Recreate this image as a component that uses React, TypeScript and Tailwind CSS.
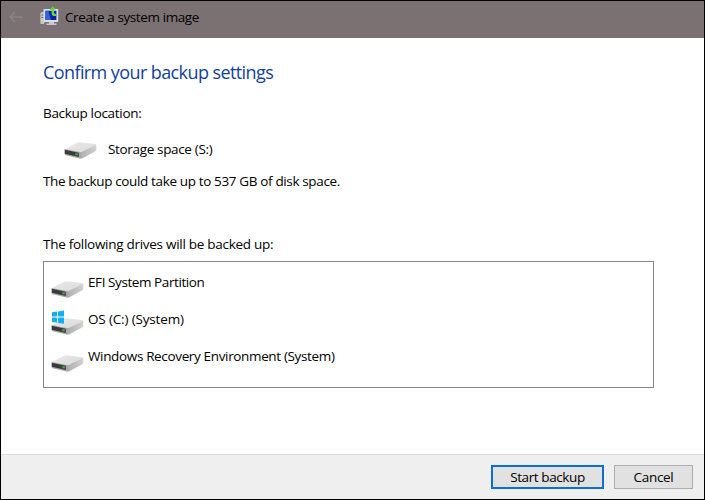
function Drive({ windows = false, className = "" }: { windows?: boolean; className?: string }) {
  return (
    <svg width="34" height="26" viewBox="0 0 34 26" className={className} aria-hidden="true">
      <defs>
        <linearGradient id="top" x1="0" y1="0" x2="1" y2="1">
          <stop offset="0" stopColor="#e9e9e9" />
          <stop offset="1" stopColor="#dadadc" />
        </linearGradient>
        <linearGradient id="side" x1="0" y1="0" x2="1" y2="0">
          <stop offset="0" stopColor="#aeaeae" />
          <stop offset="1" stopColor="#d2d2d4" />
        </linearGradient>
      </defs>
      <path d="M0.8 15.2 L13 8.8 Q14.2 8.2 15.5 8.3 L30.8 10 Q32.4 10.3 32.2 11.4 L18 19 Z" fill="url(#top)" />
      <path d="M16.5 18.4 L32.3 11 V16 Q32.2 16.8 31 17.4 L18 24.4 L16.5 24.4 Z" fill="url(#side)" />
      <path d="M0.6 14.9 L17.2 18.2 V24.6 L15.5 24.6 L1.8 21.2 Q0.6 20.8 0.6 20 Z" fill="#a8a8a8" />
      <path d="M0.8 15.7 L14.8 18.7 V22.9 L0.8 19.8 Z" fill="#393c3a" />
      <rect x="11.2" y="19.2" width="2.6" height="2.1" fill="#3fa93f" />
      {windows && (
        <g fill="#12b0ec">
          <path d="M1 2.2 L6 1.5 V6.5 H1 Z" />
          <path d="M7 1.4 L13 0.6 V6.5 H7 Z" />
          <path d="M1 7.5 H6 V12.7 L1 12 Z" />
          <path d="M7 7.5 H13 V13.8 L7 13 Z" />
        </g>
      )}
    </svg>
  );
}

function BackArrow() {
  return (
    <svg width="14" height="12" viewBox="0 0 14 12" className="ml-[8px]" aria-hidden="true">
      <path d="M6 1 L1.2 6 L6 11 M1.2 6 H13.5" fill="none" stroke="#8b8482" strokeWidth="1.6" />
    </svg>
  );
}

function BackupIcon() {
  return (
    <svg width="20" height="20" viewBox="0 0 20 20" className="-mt-[2px] ml-[17px]" aria-hidden="true">
      <path d="M0.8 7 L4 6 V17.5 H0.8 Z" fill="#c3c8c0" stroke="#d9dbd9" strokeWidth=".6" />
      <path d="M1.4 9 H3.4 M1.4 11.5 H3.4" stroke="#566056" />
      <rect x="3.6" y="3" width="14.6" height="13" rx=".6" fill="#dcdfe4" />
      <rect x="5.4" y="4.8" width="11" height="9.2" fill="#0b1ea6" />
      <path d="M5.4 4.8 H8.4 L11 14 H5.4 Z" fill="#2f62dc" />
      <path d="M9 16 H14 V17.4 H16.5 V19 H6.5 V17.4 H9 Z" fill="#c9c9cd" />
      <path d="M9.4 4.2 L12.6 0.4 L16 3.6 H14 V6.6 Q14 8.2 16 8 V10 Q11.6 10.4 11.6 7.2 V4.2 Z" fill="#59dc35" />
    </svg>
  );
}

export default function App() {
  return (
    <div className="flex h-[500px] w-[705px] flex-col border border-black bg-white font-['Open_Sans','Noto_Sans',sans-serif] text-[13.5px] leading-[18px] text-black">
      <header className="flex h-[37px] shrink-0 items-center bg-[#7b7172] pb-[6px]">
        <BackArrow />
        <BackupIcon />
        <h1 className="ml-[5px] whitespace-nowrap tracking-[-0.4px]">Create a system image</h1>
      </header>
      <main className="flex flex-1 flex-col items-start whitespace-nowrap pl-[42px]">
        <h2 className="mt-[22px] text-[18px] leading-[24px] tracking-[-0.59px] text-[#123f99]">Confirm your backup settings</h2>
        <p className="mt-[20px] tracking-[-0.32px]">Backup location:</p>
        <div className="mt-[13px] flex h-[26px] items-center pl-[21px]">
          <Drive className="-mt-[2px]" />
          <span className="ml-[10px] mt-[2px] tracking-[-0.34px]">Storage space (S:)</span>
        </div>
        <p className="mt-[11px] tracking-[-0.36px]">The backup could take up to 537 GB of disk space.</p>
        <p className="mt-[45px] tracking-[-0.28px]">The following drives will be backed up:</p>
        <ul className="mt-[8px] h-[127px] w-[611px] border border-[#85858b] pl-[7px] pt-[8px]">
          <li className="flex h-[37px]">
            <Drive className="mt-[3px]" />
            <span className="ml-[3px] mt-[3px] tracking-[-0.42px]">EFI System Partition</span>
          </li>
          <li className="flex h-[37px]">
            <Drive windows className="mt-[3px]" />
            <span className="ml-[3px] mt-[3px] tracking-[-0.16px]">OS (C:) (System)</span>
          </li>
          <li className="flex h-[37px]">
            <Drive className="mt-[3px]" />
            <span className="ml-[3px] mt-[3px] tracking-[-0.35px]">Windows Recovery Environment (System)</span>
          </li>
        </ul>
      </main>
      <footer className="flex h-[45px] shrink-0 items-start justify-end gap-[10px] border-t border-[#dcdcdc] bg-[#efefef] pr-[11px] pt-[10px]">
        <button className="h-[24px] w-[113px] whitespace-nowrap border-2 border-[#0b6fd3] bg-[#e1e1e1] leading-[18px] tracking-[-0.4px]">Start backup</button>
        <button className="h-[24px] w-[79px] whitespace-nowrap border border-[#adadad] bg-[#e1e1e1] leading-[18px] tracking-[-0.3px]">Cancel</button>
      </footer>
    </div>
  );
}
